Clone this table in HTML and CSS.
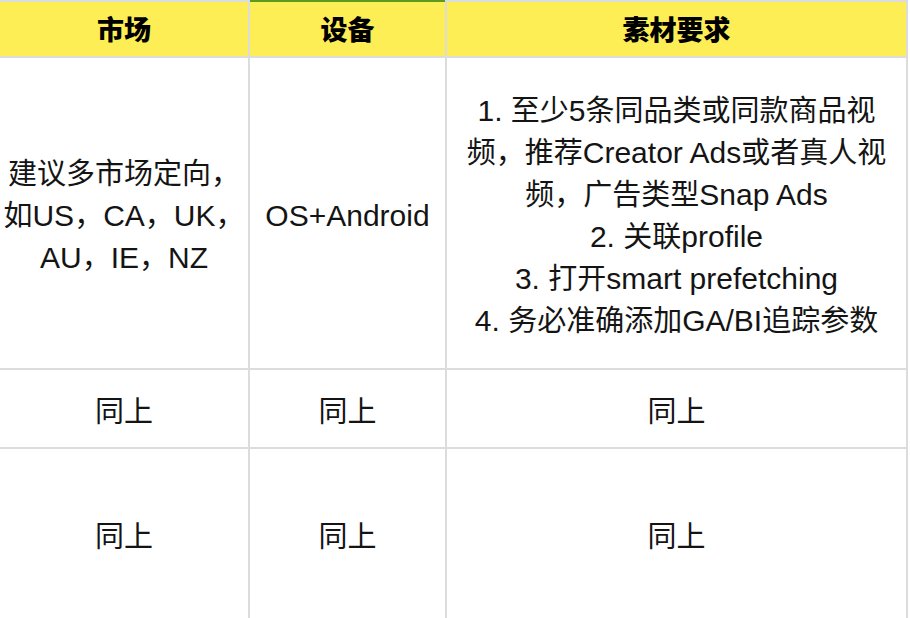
FILE: index.html
```html
<!DOCTYPE html>
<html lang="zh-CN">
<head>
<meta charset="utf-8">
<title>素材要求</title>
<link rel="stylesheet" href="styles.css">
</head>
<body>
<div class="sheet">
  <div class="cell head">市场</div>
  <div class="cell head head-active">设备</div>
  <div class="cell head">素材要求</div>

  <div class="cell row1"><p class="txt">建议多市场定向，<br>如<span class="en">US</span>，<span class="en">CA</span>，<span class="en">UK</span>，<br><span class="en">AU</span>，<span class="en">IE</span>，<span class="en">NZ</span></p></div>
  <div class="cell row1"><p class="txt"><span class="en">OS+Android</span></p></div>
  <div class="cell row1"><p class="txt"><span class="en">1. </span>至少<span class="en">5</span>条同品类或同款商品视<br>频，推荐<span class="en">Creator Ads</span>或者真人视<br>频，广告类型<span class="en">Snap Ads</span><br><span class="en">2. </span>关联<span class="en">profile</span><br><span class="en">3. </span>打开<span class="en">smart prefetching</span><br><span class="en">4. </span>务必准确添加<span class="en">GA/BI</span>追踪参数</p></div>

  <div class="cell row2"><p class="txt">同上</p></div>
  <div class="cell row2"><p class="txt">同上</p></div>
  <div class="cell row2"><p class="txt">同上</p></div>

  <div class="cell row3"><p class="txt">同上</p></div>
  <div class="cell row3"><p class="txt">同上</p></div>
  <div class="cell row3"><p class="txt">同上</p></div>
</div>
</body>
</html>
```

FILE: styles.css
```css
html, body {
  margin: 0;
  padding: 0;
  background: #ffffff;
}

body {
  width: 910px;
  height: 618px;
  overflow: hidden;
  font-family: "Liberation Sans", "Noto Sans CJK SC", sans-serif;
  color: #141414;
}

.sheet {
  display: grid;
  grid-template-columns: 248px 195px 459px;
  grid-template-rows: 54px 310px 77px 169px;
  gap: 2px;
  background: #dcdcdc;
  border-top: 2px solid #dcdcdc;
  border-right: 2px solid #dcdcdc;
  width: 906px;
}

.cell {
  background: #ffffff;
  display: flex;
  align-items: center;
  justify-content: center;
  text-align: center;
  font-size: 29px;
  line-height: 42px;
  white-space: nowrap;
  padding-top: 6px;
  box-sizing: border-box;
}

.txt {
  margin: 0;
}

.en {
  font-size: 30px;
}

.head {
  background: #feee55;
  font-weight: 900;
  color: #000000;
  font-size: 27px;
  padding-top: 4px;
}

.head-active {
  box-shadow: 0 -2px 0 0 #5b9a1f;
}
```
